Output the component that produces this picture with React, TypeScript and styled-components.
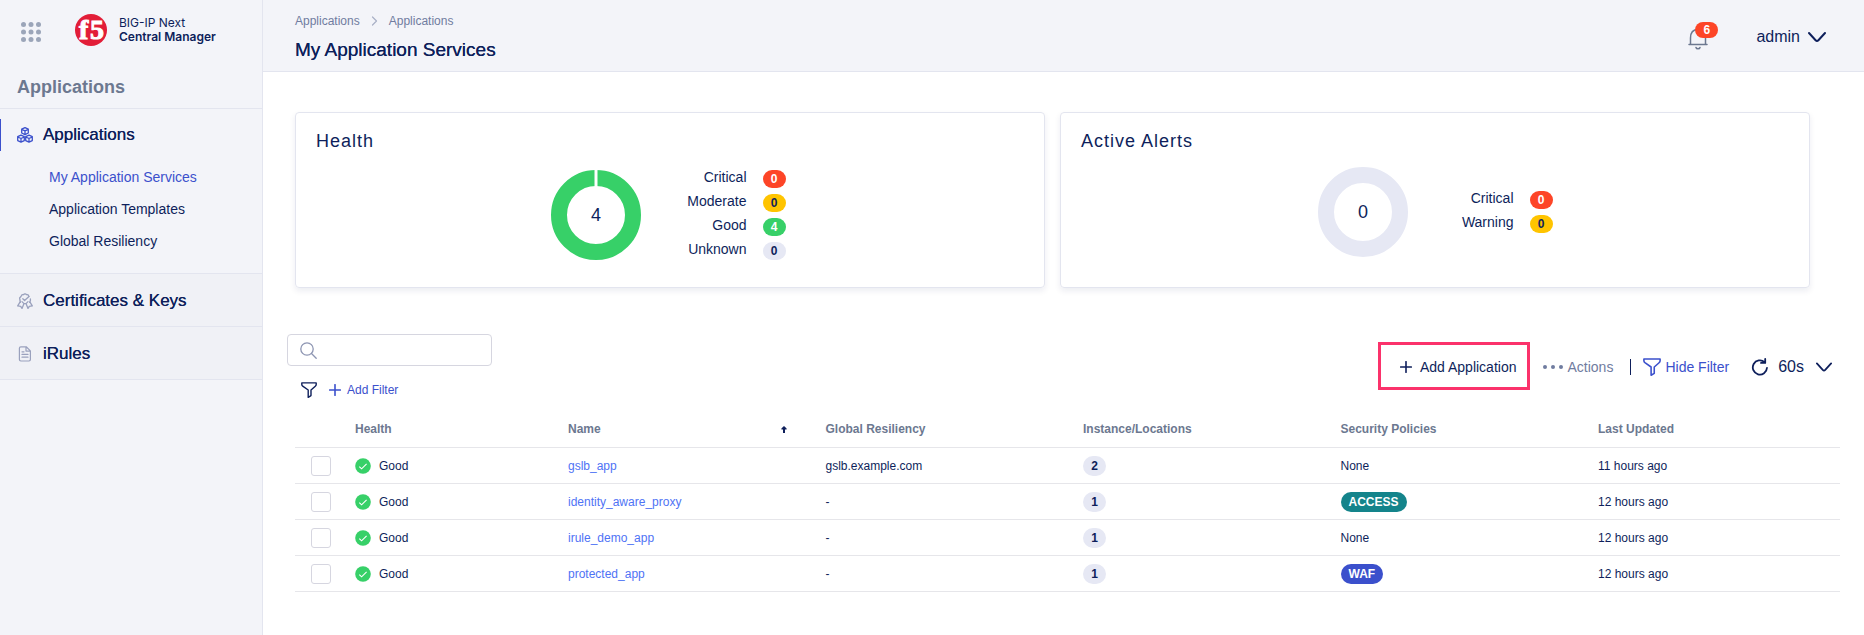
import React from "react";
import styled, { createGlobalStyle } from "styled-components";

const c = {
  navy: "#0e1f5b",
  blue: "#3b50cc",
  link: "#4f73f5",
  slate: "#6c7890",
  crumb: "#707ca0",
  panel: "#f3f4f9",
  panelAlt: "#f0f1f6",
  line: "#e3e5ef",
  rule: "#e6e6ea",
  control: "#d6d6e0",
  red: "#fd4527",
  amber: "#ffc400",
  green: "#37d068",
  mist: "#e6e8f4",
  teal: "#14848b",
  pink: "#fb326b",
};

const Global = createGlobalStyle`
  *, *::before, *::after { box-sizing: border-box; }
  body { margin: 0; background: #fff; color: ${c.navy}; font: 400 14px/20px "Liberation Sans", Arial, sans-serif; }
  h1, h2, p, ul { margin: 0; padding: 0; }
  ul { list-style: none; }
  a { color: inherit; text-decoration: none; }
  button { font: inherit; color: inherit; background: none; border: 0; padding: 0; cursor: pointer; }
  svg { display: block; flex: none; }
`;

const Shell = styled.div`
  display: grid;
  grid-template-columns: 263px minmax(0, 1fr);
  min-height: 100vh;
`;

const Sidebar = styled.aside`
  background: ${c.panel};
  border-right: 1px solid ${c.line};
`;

const Brand = styled.div`
  display: flex;
  align-items: center;
  height: 60px;
  padding-left: 21px;
`;

const AppsButton = styled.button`
  padding-top: 4px;
`;

const BrandLink = styled.a`
  display: flex;
  align-items: center;
  gap: 12px;
  margin-left: 34px;
`;

const BrandName = styled.span`
  display: flex;
  flex-direction: column;
  font: 400 12px/14px Inter, sans-serif;
  strong { font-weight: 600; }
`;

const SideTitle = styled.h2`
  height: 49px;
  padding: 16px 17px 0;
  border-bottom: 1px solid ${c.line};
  color: ${c.slate};
  font-size: 18px;
  line-height: 22px;
`;

const Section = styled.section<{ $open?: boolean }>`
  padding: ${(p) => (p.$open ? "10px 0 16px" : "11px 0 9px")};
  background: ${(p) => (p.$open ? "transparent" : c.panelAlt)};
  border-bottom: 1px solid ${c.line};
`;

const SectionLink = styled.a<{ $active?: boolean }>`
  display: flex;
  align-items: center;
  gap: 10px;
  height: 32px;
  padding-left: 16px;
  border-left: 1px solid ${(p) => (p.$active ? c.blue : "transparent")};
  font-size: 17px;
  text-shadow: 0 0 0 currentColor;
  svg { color: ${(p) => (p.$active ? c.blue : "#9aa1bd")}; }
`;

const SubList = styled.ul`
  padding: 10px 0 0 49px;
`;

const SubLink = styled.a<{ $active?: boolean }>`
  display: block;
  line-height: 32px;
  color: ${(p) => (p.$active ? c.blue : c.navy)};
`;

const Page = styled.div`
  display: flex;
  flex-direction: column;
`;

const TopBar = styled.header`
  display: flex;
  justify-content: space-between;
  align-items: center;
  height: 72px;
  padding: 2px 38px 0 32px;
  background: ${c.panel};
  border-bottom: 1px solid ${c.line};
`;

const Crumbs = styled.nav`
  display: flex;
  align-items: center;
  gap: 11px;
  color: ${c.crumb};
  font-size: 12px;
  line-height: 20px;
`;

const PageTitle = styled.h1`
  padding-top: 7px;
  font-size: 19px;
  font-weight: 400;
  line-height: 24px;
  text-shadow: 0 0 0 currentColor;
`;

const UserArea = styled.div`
  display: flex;
  align-items: center;
  gap: 48px;
`;

const BellButton = styled.button`
  position: relative;
  margin-top: 4px;
`;

const BellCount = styled.span`
  position: absolute;
  top: -6px;
  left: 7px;
  width: 23px;
  border-radius: 8px;
  background: ${c.red};
  color: #fff;
  font-size: 12px;
  font-weight: 700;
  line-height: 16px;
`;

const UserButton = styled.button`
  display: flex;
  align-items: center;
  gap: 8px;
  font-size: 16px;
`;

const Content = styled.main`
  padding: 40px 24px 40px 32px;
`;

const Cards = styled.div`
  display: grid;
  grid-template-columns: 1fr 1fr;
  gap: 15px;
  margin-right: 30px;
`;

const Card = styled.section`
  padding: 16px 20px 24px;
  border: 1px solid ${c.line};
  border-radius: 4px;
  box-shadow: 0 3px 6px rgba(14, 31, 91, 0.08);
`;

const CardTitle = styled.h2`
  height: 38px;
  font-size: 18px;
  font-weight: 400;
  line-height: 24px;
  letter-spacing: 1px;
`;

const CardBody = styled.div<{ $shift?: boolean }>`
  display: flex;
  justify-content: center;
  align-items: center;
  gap: 40px;
  padding-right: ${(p) => (p.$shift ? "4px" : "0")};
`;

const Legend = styled.ul`
  width: 105px;
`;

const LegendRow = styled.li`
  display: flex;
  justify-content: flex-end;
  align-items: center;
  gap: 16px;
  height: 24px;
  span:first-child { padding-bottom: 4px; }
`;

const Pill = styled.span<{ $bg: string; $fg?: string; $tall?: boolean }>`
  display: inline-block;
  min-width: 23px;
  padding: 0 8px;
  border-radius: 10px;
  background: ${(p) => p.$bg};
  color: ${(p) => p.$fg || "#fff"};
  font-size: 12px;
  font-weight: 700;
  line-height: ${(p) => (p.$tall ? "20px" : "18px")};
  text-align: center;
  vertical-align: top;
`;

const Toolbar = styled.div`
  display: flex;
  justify-content: space-between;
  align-items: flex-start;
  margin-top: 46px;
`;

const Filters = styled.div`
  margin-left: -8px;
`;

const SearchBox = styled.label`
  display: flex;
  align-items: center;
  gap: 8px;
  width: 205px;
  height: 32px;
  padding: 0 12px;
  border: 1px solid ${c.control};
  border-radius: 4px;
  color: #8d95b2;
  input { flex: 1; min-width: 0; border: 0; outline: 0; background: none; font: inherit; color: ${c.navy}; }
`;

const FilterRow = styled.div`
  display: flex;
  align-items: center;
  gap: 12px;
  height: 24px;
  margin-top: 12px;
  padding-left: 14px;
`;

const TextButton = styled.button<{ $color?: string; $small?: boolean; $gap: number }>`
  display: flex;
  align-items: center;
  gap: ${(p) => p.$gap}px;
  color: ${(p) => p.$color || c.navy};
  font-size: ${(p) => (p.$small ? 12 : 14)}px;
`;

const Actions = styled.div`
  display: flex;
  align-items: center;
  height: 50px;
  margin-top: 8px;
`;

const Callout = styled.div`
  display: flex;
  align-items: center;
  height: 48px;
  margin: 0 13px 2px 0;
  padding: 2px 11px 0 19px;
  border: 3px solid ${c.pink};
`;

const Divider = styled.span`
  width: 1px;
  height: 16px;
  margin: 0 12px 0 17px;
  background: ${c.navy};
`;

const Refresh = styled.div`
  display: flex;
  align-items: center;
  gap: 9px;
  margin: 0 8px 0 22px;
`;

const Interval = styled.button`
  display: flex;
  align-items: center;
  gap: 12px;
  font-size: 16px;
`;

const Table = styled.table`
  width: 100%;
  margin-top: 9px;
  border-collapse: collapse;
  table-layout: fixed;
  font-size: 12px;
  th, td { height: 36px; padding: 1px 0 0; text-align: left; border-bottom: 1px solid ${c.rule}; }
  th { color: ${c.slate}; }
`;

const TickCol = styled.col` width: 60px; `;
const HealthCol = styled.col` width: 213px; `;
const UpdatedCol = styled.col` width: 242px; `;

const Tick = styled.input`
  appearance: none;
  display: block;
  width: 20px;
  height: 20px;
  margin: 0 0 0 16px;
  border: 1px solid ${c.control};
  border-radius: 3px;
  background: #fff;
`;

const SortHead = styled.div`
  display: flex;
  justify-content: space-between;
  align-items: center;
  padding-right: 39px;
`;

const Status = styled.span`
  display: flex;
  align-items: center;
  gap: 8px;
`;

const AppLink = styled.a`
  color: ${c.link};
`;

const stroke = { fill: "none", stroke: "currentColor", strokeLinecap: "round", strokeLinejoin: "round" } as const;

const AppsIcon = () => (
  <svg width="20" height="20" viewBox="0 0 20 20" fill="#9ba5b9">
    {[2.5, 10, 17.5].map((y) => [2.5, 10, 17.5].map((x) => <circle key={`${x}-${y}`} cx={x} cy={y} r="2.5" />))}
  </svg>
);

const Logo = () => (
  <svg width="32" height="32" viewBox="0 0 32 32">
    <circle cx="16" cy="16" r="16" fill="#e21d38" />
    <g fill="#fff" stroke="#fff" fontFamily="'Liberation Serif', serif" fontWeight="700" fontSize="28">
      <text x="4" y="25">f</text>
      <text x="15" y="25">5</text>
    </g>
  </svg>
);

const Cube = ({ x, y }: { x: number; y: number }) => (
  <g transform={`translate(${x} ${y})`}>
    <path d="M0-3.5 3.3-2V1.9L0 3.5-3.3 1.9V-2ZM-3.3-1.7 0-.2 3.3-1.7M0-.2V3.3" />
  </g>
);

const CubesIcon = () => (
  <svg width="16" height="16" viewBox="0 0 16 16" {...stroke} strokeWidth="1.3">
    <Cube x={8} y={4.1} />
    <Cube x={4} y={11.7} />
    <Cube x={12} y={11.7} />
  </svg>
);

const CertIcon = () => (
  <svg width="16" height="16" viewBox="0 0 16 16" {...stroke} strokeWidth="1.3">
    <path d="M3.4 9.3 2.9 7 2.6 5 4 3.5 4.9 1.8 6.8 1.5 8 .7l1.3.8 1.8.3L12 3.5" />
    <path d="m5.8 5.8 1.8 1.7L12 3.6M13.4 6v1.6l-.8 1.7" />
    <path d="M5 8.6 7 10.6 5 15.4 3.7 13.3.7 12.9 3 9.2M11 8.6 9 10.6l2 4.8 1.3-2.1 3-.4L13 9.2M7 10.6h2" />
  </svg>
);

const DocIcon = () => (
  <svg width="16" height="16" viewBox="0 0 16 16" {...stroke} strokeWidth="1.2">
    <path d="M3.8.8h5.4l4.2 4.1v8.7a1.4 1.4 0 0 1-1.4 1.4H3.8a1.4 1.4 0 0 1-1.4-1.4V2.2A1.4 1.4 0 0 1 3.8.8ZM9 1v4.1h4.2M5 5.8h2M5 8.4h6M5 11.2h6" />
  </svg>
);

const BellIcon = () => (
  <svg width="20" height="22" viewBox="0 0 20 22" {...stroke} stroke="#6c7890" strokeWidth="1.5">
    <path d="M1 16.5h18M2.5 16.3V10C2.5 4.5 5 1.5 10 1.5s7.5 3 7.5 8.5v6.3" />
    <path d="M8 19.5c.4 1.8 3.6 1.8 4 0" />
  </svg>
);

const Chevron = ({ size = 18 }: { size?: number }) => (
  <svg width={size} height={size} viewBox="0 0 18 18" {...stroke} strokeWidth="2">
    <path d="m1 5 6.6 7.2q1.4 1.4 2.8 0L17 5" />
  </svg>
);

const CrumbIcon = () => (
  <svg width="7" height="10" viewBox="0 0 7 10" {...stroke} stroke="#a9b0c6" strokeWidth="1.2">
    <path d="m1.5 1 4 4-4 4" />
  </svg>
);

const SearchIcon = () => (
  <svg width="17" height="17" viewBox="0 0 17 17" {...stroke} strokeWidth="1.3">
    <circle cx="7" cy="7" r="6.2" />
    <path d="m11.5 11.5 4.7 4.7" />
  </svg>
);

const FunnelIcon = ({ size = 16 }: { size?: number }) => (
  <svg width={size} height={size} viewBox="0 0 16 16" {...stroke} strokeWidth="1.4">
    <path d="M.8.9h14.4v1.6q0 1-.9 1.7L10 8v5.6L7.2 15.3V8L1.7 4.2Q.8 3.5.8 2.5Z" />
  </svg>
);

const PlusIcon = () => (
  <svg width="12" height="12" viewBox="0 0 12 12" {...stroke} strokeWidth="1.6">
    <path d="M6 .7v10.6M.7 6h10.6" />
  </svg>
);

const DotsIcon = () => (
  <svg width="20" height="4" viewBox="0 0 20 4" fill="currentColor">
    <circle cx="2" cy="2" r="2" />
    <circle cx="10" cy="2" r="2" />
    <circle cx="18" cy="2" r="2" />
  </svg>
);

const RefreshIcon = () => (
  <svg width="18" height="18" viewBox="0 0 18 18" {...stroke} strokeWidth="1.8">
    <path d="M16 9.8A7.1 7.1 0 1 1 13.6 4.1M14.2.9v4H10" />
  </svg>
);

const CheckIcon = () => (
  <svg width="16" height="16" viewBox="0 0 16 16">
    <circle cx="8" cy="8" r="7.8" fill={c.green} />
    <path d="m4.3 8.6 2.3 2.2 5-5" fill="none" stroke="#fff" strokeWidth="1.1" />
  </svg>
);

const SortIcon = () => (
  <svg width="6" height="7" viewBox="0 0 6 7" fill={c.navy}>
    <path d="M3 0 5.6 2.6V3.6H4V7H2V3.6H.4v-1Z" />
  </svg>
);

const Donut = ({ value, color, split }: { value: number; color: string; split?: boolean }) => (
  <svg width="90" height="90" viewBox="0 0 90 90" role="img" aria-label={`Total ${value}`}>
    <circle cx="45" cy="45" r="37" fill="none" stroke={color} strokeWidth="16" />
    {split && <path d="M45 0v17" stroke="#fff" strokeWidth="3" />}
    <text x="45" y="51" textAnchor="middle" fontSize="18" fill={c.navy}>{value}</text>
  </svg>
);

type Entry = { label: string; count: number; bg: string; fg?: string };

const health: Entry[] = [
  { label: "Critical", count: 0, bg: c.red },
  { label: "Moderate", count: 0, bg: c.amber, fg: c.navy },
  { label: "Good", count: 4, bg: c.green },
  { label: "Unknown", count: 0, bg: c.mist, fg: c.navy },
];

const alerts: Entry[] = [
  { label: "Critical", count: 0, bg: c.red },
  { label: "Warning", count: 0, bg: c.amber, fg: c.navy },
];

const apps = [
  { name: "gslb_app", gslb: "gslb.example.com", count: 2, policy: "None", updated: "11 hours ago" },
  { name: "identity_aware_proxy", gslb: "-", count: 1, policy: "ACCESS", tag: c.teal, updated: "12 hours ago" },
  { name: "irule_demo_app", gslb: "-", count: 1, policy: "None", updated: "12 hours ago" },
  { name: "protected_app", gslb: "-", count: 1, policy: "WAF", tag: c.blue, updated: "12 hours ago" },
];

const Summary = ({ title, total, color, entries, split }: { title: string; total: number; color: string; entries: Entry[]; split?: boolean }) => (
  <Card>
    <CardTitle>{title}</CardTitle>
    <CardBody $shift={split}>
      <Donut value={total} color={color} split={split} />
      <Legend>
        {entries.map((e) => (
          <LegendRow key={e.label}>
            <span>{e.label}</span>
            <Pill $bg={e.bg} $fg={e.fg}>{e.count}</Pill>
          </LegendRow>
        ))}
      </Legend>
    </CardBody>
  </Card>
);

export default function App() {
  return (
    <>
      <Global />
      <Shell>
        <Sidebar>
          <Brand>
            <AppsButton aria-label="Open workspace switcher"><AppsIcon /></AppsButton>
            <BrandLink href="#home">
              <Logo />
              <BrandName>BIG-IP Next<strong>Central Manager</strong></BrandName>
            </BrandLink>
          </Brand>
          <SideTitle>Applications</SideTitle>
          <nav>
            <Section $open>
              <SectionLink href="#applications" $active><CubesIcon />Applications</SectionLink>
              <SubList>
                <li><SubLink href="#services" $active>My Application Services</SubLink></li>
                <li><SubLink href="#templates">Application Templates</SubLink></li>
                <li><SubLink href="#resiliency">Global Resiliency</SubLink></li>
              </SubList>
            </Section>
            <Section>
              <SectionLink href="#certificates"><CertIcon />Certificates &amp; Keys</SectionLink>
            </Section>
            <Section>
              <SectionLink href="#irules"><DocIcon />iRules</SectionLink>
            </Section>
          </nav>
        </Sidebar>
        <Page>
          <TopBar>
            <div>
              <Crumbs aria-label="Breadcrumb">
                <a href="#applications">Applications</a>
                <CrumbIcon />
                <a href="#services">Applications</a>
              </Crumbs>
              <PageTitle>My Application Services</PageTitle>
            </div>
            <UserArea>
              <BellButton aria-label="Notifications">
                <BellIcon />
                <BellCount>6</BellCount>
              </BellButton>
              <UserButton>admin<Chevron /></UserButton>
            </UserArea>
          </TopBar>
          <Content>
            <Cards>
              <Summary title="Health" total={4} color={c.green} entries={health} split />
              <Summary title="Active Alerts" total={0} color={c.mist} entries={alerts} />
            </Cards>
            <Toolbar>
              <Filters>
                <SearchBox>
                  <SearchIcon />
                  <input type="search" aria-label="Search applications" />
                </SearchBox>
                <FilterRow>
                  <FunnelIcon />
                  <TextButton $color={c.blue} $small $gap={6}><PlusIcon />Add Filter</TextButton>
                </FilterRow>
              </Filters>
              <Actions>
                <Callout>
                  <TextButton $gap={8}><PlusIcon />Add Application</TextButton>
                </Callout>
                <TextButton $color={c.crumb} $gap={4}><DotsIcon />Actions</TextButton>
                <Divider />
                <TextButton $color={c.blue} $gap={4}><FunnelIcon size={18} />Hide Filter</TextButton>
                <Refresh>
                  <button aria-label="Refresh"><RefreshIcon /></button>
                  <Interval>60s<Chevron size={16} /></Interval>
                </Refresh>
              </Actions>
            </Toolbar>
            <Table>
              <colgroup>
                <TickCol />
                <HealthCol />
                <col /><col /><col /><col />
                <UpdatedCol />
              </colgroup>
              <thead>
                <tr>
                  <th aria-label="Select" />
                  <th>Health</th>
                  <th aria-sort="ascending"><SortHead>Name<SortIcon /></SortHead></th>
                  <th>Global Resiliency</th>
                  <th>Instance/Locations</th>
                  <th>Security Policies</th>
                  <th>Last Updated</th>
                </tr>
              </thead>
              <tbody>
                {apps.map((a) => (
                  <tr key={a.name}>
                    <td><Tick type="checkbox" aria-label={`Select ${a.name}`} /></td>
                    <td><Status><CheckIcon />Good</Status></td>
                    <td><AppLink href={`#${a.name}`}>{a.name}</AppLink></td>
                    <td>{a.gslb}</td>
                    <td><Pill $tall $bg={c.mist} $fg={c.navy}>{a.count}</Pill></td>
                    <td>{a.tag ? <Pill $tall $bg={a.tag}>{a.policy}</Pill> : a.policy}</td>
                    <td>{a.updated}</td>
                  </tr>
                ))}
              </tbody>
            </Table>
          </Content>
        </Page>
      </Shell>
    </>
  );
}
